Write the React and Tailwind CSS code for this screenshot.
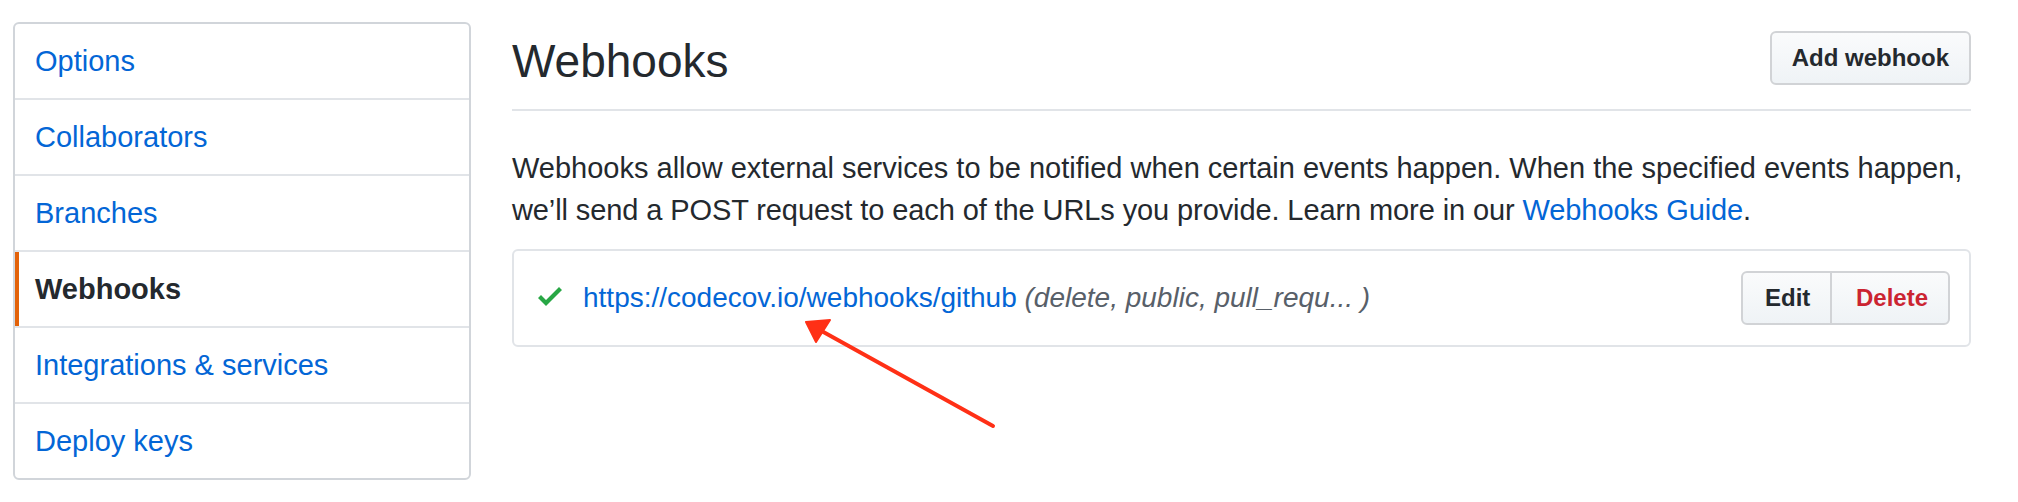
import React from "react";

const items = [
  { label: "Options" },
  { label: "Collaborators" },
  { label: "Branches" },
  { label: "Webhooks", active: true },
  { label: "Integrations & services" },
  { label: "Deploy keys" },
];

function Sidebar() {
  return (
    <nav className="w-[458px] shrink-0 self-start rounded-[6px] border-2 border-[#d1d5da] bg-white">
      {items.map((it, i) => (
        <div
          key={it.label}
          className={
            (i > 0 ? "border-t-2 border-[#e1e4e8] " : "") +
            "relative flex h-[76px] items-center px-[20px] first:h-[74px]"
          }
        >
          {it.active && (
            <span className="absolute left-0 top-0 bottom-0 w-[4px] bg-[#e36209]" />
          )}
          <span
            className={
              it.active
                ? "text-[29px] leading-[34px] font-bold text-[#24292e]"
                : "text-[29px] leading-[34px] text-[#0366d6]"
            }
          >
            {it.label}
          </span>
        </div>
      ))}
    </nav>
  );
}

function CheckIcon() {
  return (
    <svg
      width="24"
      height="20"
      viewBox="0 3 12 10"
      className="mb-[4px] shrink-0 fill-[#28a745]"
    >
      <path d="M12 5l-8 8-4-4 1.5-1.5L4 10l6.5-6.5L12 5z" />
    </svg>
  );
}

function Main() {
  return (
    <main className="w-[1459px] shrink-0">
      <div className="flex items-start justify-between border-b-2 border-[#e1e4e8] pt-[9px] pb-[21px]">
        <h2 className="mt-[3px] text-[46px] leading-[54px] font-normal text-[#24292e]">
          Webhooks
        </h2>
        <button className="h-[54px] rounded-[6px] border-2 border-[#d1d3d6] bg-gradient-to-b from-[#fafbfc] to-[#eff3f6] px-[20px] text-[24px] font-bold text-[#24292e]">
          Add webhook
        </button>
      </div>
      <p className="mt-[36px] text-[29px] leading-[42px] text-[#24292e] whitespace-nowrap">
        <span className="block">
          Webhooks allow external services to be notified when certain events
          happen. When the specified events happen,
        </span>
        <span className="block tracking-[-0.1px]">
          <span>
            we’ll send a POST request to each of the URLs you provide. Learn
            more in our{" "}
          </span>
          <a className="text-[#0366d6]">Webhooks Guide</a>
          <span>.</span>
        </span>
      </p>
      <div className="mt-[18px] flex items-center justify-between rounded-[6px] border-2 border-[#e1e4e8] py-[20px] pl-[24px] pr-[19px]">
        <div className="flex items-center gap-[21px]">
          <CheckIcon />
          <div className="text-[28px] leading-[32px] whitespace-nowrap">
            <a className="text-[#0366d6]">https://codecov.io/webhooks/github</a>{" "}
            <span className="italic text-[#586069]">
              (delete, public, pull_requ... )
            </span>
          </div>
        </div>
        <div className="flex h-[54px] overflow-hidden rounded-[6px] border-2 border-[#d1d3d6] bg-gradient-to-b from-[#fafbfc] to-[#eff3f6] text-[24px] font-bold">
          <button className="w-[87px] pl-[22px] pr-[20px] text-left text-[#24292e]">
            Edit
          </button>
          <button className="w-[118px] border-l-2 border-[#d1d3d6] pl-[24px] pr-[20px] text-left text-[#cb2431]">
            Delete
          </button>
        </div>
      </div>
    </main>
  );
}

function Arrow() {
  return (
    <svg
      className="pointer-events-none absolute left-0 top-0"
      width="2018"
      height="502"
    >
      <line
        x1="993"
        y1="426"
        x2="818"
        y2="329"
        stroke="#ff3016"
        strokeWidth="4"
        strokeLinecap="round"
      />
      <polygon
        points="806,322 830,320 816,342"
        fill="#ff3016"
        stroke="#ff3016"
        strokeWidth="2"
        strokeLinejoin="round"
      />
    </svg>
  );
}

export default function App() {
  return (
    <div className="relative h-[502px] w-[2018px] overflow-hidden bg-white font-['Liberation_Sans',Arial,sans-serif]">
      <div className="flex gap-[41px] pl-[13px] pt-[22px]">
        <Sidebar />
        <Main />
      </div>
      <Arrow />
    </div>
  );
}
